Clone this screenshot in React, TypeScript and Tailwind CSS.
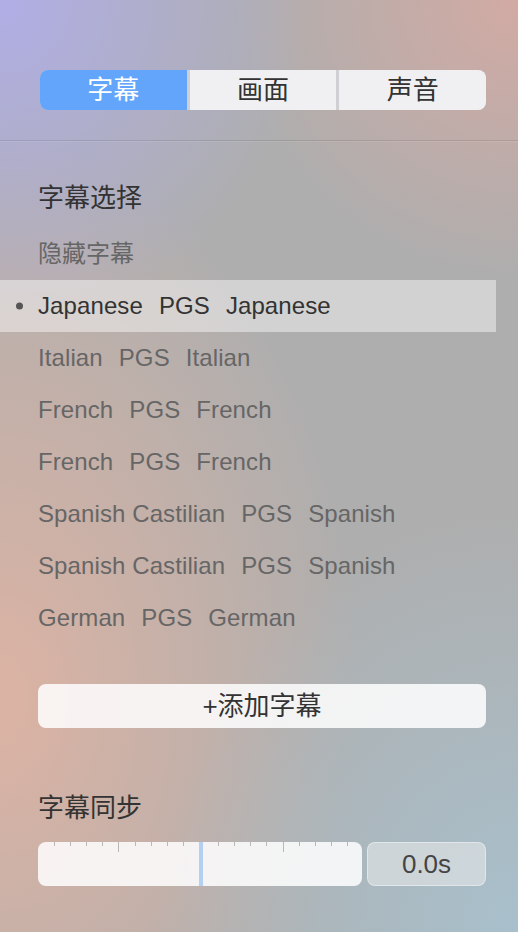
import { useState } from "react";

const TABS = ["字幕", "画面", "声音"];

const TRACKS = [
  ["Japanese", "PGS", "Japanese"],
  ["Italian", "PGS", "Italian"],
  ["French", "PGS", "French"],
  ["French", "PGS", "French"],
  ["Spanish Castilian", "PGS", "Spanish"],
  ["Spanish Castilian", "PGS", "Spanish"],
  ["German", "PGS", "German"],
];

const TICKS = Array.from({ length: 19 }, (_, i) => i);

export default function App() {
  const [tab, setTab] = useState(0);
  const [selected, setSelected] = useState(0);

  return (
    <div
      className="relative min-h-[932px] w-full overflow-hidden bg-[radial-gradient(ellipse_60%_35%_at_0%_0%,#b0aee6_0%,transparent_100%),radial-gradient(ellipse_55%_30%_at_100%_0%,#d2aaa3_0%,transparent_100%),radial-gradient(ellipse_70%_45%_at_100%_100%,#a8c0cc_0%,transparent_100%),radial-gradient(ellipse_70%_60%_at_0%_75%,#dcb3a3_0%,transparent_100%),linear-gradient(#aeaeae,#aeaeae)] font-['Liberation_Sans','Noto_Sans_CJK_SC',sans-serif]"
    >
      {/* tabs */}
      <div className="pl-10 pr-8 pt-[70px] pb-[30px]">
        <div className="flex h-10 overflow-hidden rounded-lg bg-[#cfcfd4]">
          {TABS.map((t, i) => (
            <button
              key={t}
              onClick={() => setTab(i)}
              className={`flex flex-1 items-center justify-center text-[26px] ${i > 0 ? "ml-[3px]" : ""} ${
                tab === i ? "bg-[#63a5fa] text-white" : "bg-[#f0eff1] text-[#333]"
              }`}
            >
              {t}
            </button>
          ))}
        </div>
      </div>

      <div className="h-px w-full bg-black/10" />
      <div className="h-px w-full bg-white/10" />

      {/* subtitle list */}
      <div className="pt-[38px]">
        <div className="px-[38px] text-[26px] leading-[36px] text-[#333]">字幕选择</div>
        <div className="mt-[20px] px-[38px] text-[24px] leading-[36px] text-[#666]">隐藏字幕</div>
        <ul className="mt-[8px] w-[496px]">
          {TRACKS.map((tr, i) => (
            <li
              key={i}
              onClick={() => setSelected(i)}
              className={`relative flex h-[52px] items-center gap-4 pl-[38px] text-[24px] tracking-[0.1px] ${
                selected === i ? "bg-white/45 text-[#333]" : "text-[#666]"
              }`}
            >
              {selected === i && (
                <span className="absolute left-[16px] top-1/2 h-[7px] w-[7px] -translate-y-1/2 rounded-full bg-[#555]" />
              )}
              {tr.map((w, j) => (
                <span key={j}>{w}</span>
              ))}
            </li>
          ))}
        </ul>
      </div>

      <div className="pl-[38px] pr-8 pt-[40px]">
        <button className="flex h-[44px] w-full items-center justify-center rounded-lg bg-white/85 text-[26px] text-[#333]">
          +添加字幕
        </button>
      </div>

      {/* sync */}
      <div className="pl-[38px] pr-8 pt-[62px]">
        <div className="text-[26px] leading-[36px] text-[#333]">字幕同步</div>
        <div className="mt-[16px] flex gap-[5px]">
          <div className="h-[44px] w-[324px] rounded-lg bg-white/85">
            <div className="flex h-full items-start justify-between pl-[16px] pr-[14px]">
              {TICKS.map((i) =>
                i === 9 ? (
                  <div key={i} className="h-[44px] w-[4px] bg-[#b3cff2]" />
                ) : (
                  <div
                    key={i}
                    className={`w-[1px] bg-[#b8b8b8] ${i === 4 || i === 14 ? "h-[10px]" : "h-[4px]"}`}
                  />
                )
              )}
            </div>
          </div>
          <div className="flex h-[44px] flex-1 items-center justify-center rounded-lg border border-white/40 bg-[#d6dcdf]/80 text-[26px] text-[#444]">
            0.0s
          </div>
        </div>
      </div>
    </div>
  );
}
